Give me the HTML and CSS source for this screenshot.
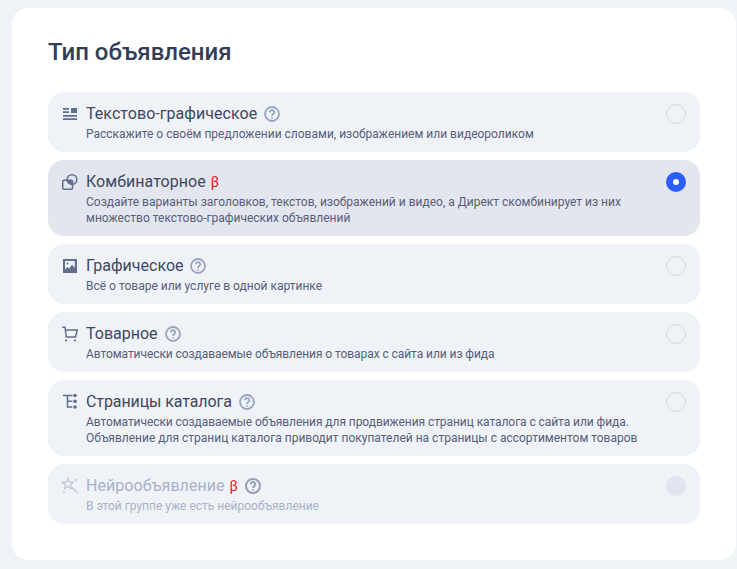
FILE: index.html
```html
<!DOCTYPE html>
<html lang="ru">
<head>
<meta charset="utf-8">
<title>Тип объявления</title>
<link rel="stylesheet" href="styles.css">
</head>
<body>
<main class="card">
  <h1 class="title">Тип объявления</h1>
  <div class="list">
    <div class="row">
      <svg class="icon" viewBox="0 0 16 16"><path d="M1 2h6v1.700H1zM1 5.300h6V7H1zM9 2h6v5H9zM1 9h14v1.700H1zM1 12.300h14V14H1z"/></svg>
      <div class="body">
        <div class="head"><span class="name wide">Текстово-графическое</span><svg class="help" viewBox="0 0 16 16"><circle class="help-ring" cx="8" cy="8" r="7"/><path class="help-mark" d="M5.800 6.300a2.200 2.200 0 1 1 3.500 1.800c-.8.500-1.300 1-1.300 1.900"/><circle class="help-dot" cx="8" cy="11.800" r=".9"/></svg></div>
        <p class="desc">Расскажите о своём предложении словами, изображением или видеороликом</p>
      </div>
      <span class="radio"></span>
    </div>
    <div class="row row-selected">
      <svg class="icon" viewBox="0 0 16 16"><rect class="line" x=".75" y="6.250" width="9.750" height="9" rx="1"/><circle class="line" cx="10" cy="5.500" r="4.800"/><path d="M5.300 6.500h5.200v3.800a4.800 4.800 0 0 1-5.200-3.800z"/></svg>
      <div class="body">
        <div class="head"><span class="name wide">Комбинаторное</span><span class="beta">β</span></div>
        <p class="desc">Создайте варианты заголовков, текстов, изображений и видео, а Директ скомбинирует из них<br>множество текстово-графических объявлений</p>
      </div>
      <span class="radio radio-on"></span>
    </div>
    <div class="row">
      <svg class="icon" viewBox="0 0 16 16"><path fill-rule="evenodd" d="M1 1h14v14H1zM3 3v8.500l2.500-2.500 1.500 1.500 3-3.700 2.800 3.200V3z"/><circle cx="5.500" cy="5.500" r="1"/></svg>
      <div class="body">
        <div class="head"><span class="name">Графическое</span><svg class="help" viewBox="0 0 16 16"><circle class="help-ring" cx="8" cy="8" r="7"/><path class="help-mark" d="M5.800 6.300a2.200 2.200 0 1 1 3.500 1.800c-.8.500-1.300 1-1.300 1.900"/><circle class="help-dot" cx="8" cy="11.800" r=".9"/></svg></div>
        <p class="desc">Всё о товаре или услуге в одной картинке</p>
      </div>
      <span class="radio"></span>
    </div>
    <div class="row">
      <svg class="icon" viewBox="0 0 16 16"><path class="line" d="M.3 1.200H3l1.300 9.800h9.200l1.800-7H3.600"/><circle cx="4" cy="14.500" r="1.100"/><circle cx="13" cy="14.500" r="1.100"/></svg>
      <div class="body">
        <div class="head"><span class="name">Товарное</span><svg class="help" viewBox="0 0 16 16"><circle class="help-ring" cx="8" cy="8" r="7"/><path class="help-mark" d="M5.800 6.300a2.200 2.200 0 1 1 3.500 1.800c-.8.500-1.300 1-1.300 1.900"/><circle class="help-dot" cx="8" cy="11.800" r=".9"/></svg></div>
        <p class="desc"><span class="tight">Автоматически создаваемые объявления о товарах с сайта или из фида</span></p>
      </div>
      <span class="radio"></span>
    </div>
    <div class="row">
      <svg class="icon" viewBox="0 0 16 16"><path class="line" d="M1 1.500h9.500M5.500 1.500V13h4.800M5.500 7.300h4.800"/><circle cx="13" cy="1.500" r="1.800"/><circle cx="13" cy="7.300" r="1.800"/><circle cx="13" cy="13" r="1.800"/></svg>
      <div class="body">
        <div class="head"><span class="name narrow">Страницы каталога</span><svg class="help" viewBox="0 0 16 16"><circle class="help-ring" cx="8" cy="8" r="7"/><path class="help-mark" d="M5.800 6.300a2.200 2.200 0 1 1 3.500 1.800c-.8.500-1.300 1-1.300 1.900"/><circle class="help-dot" cx="8" cy="11.800" r=".9"/></svg></div>
        <p class="desc"><span class="tight">Автоматически создаваемые объявления для продвижения страниц каталога с сайта или фида.</span><br>Объявление для страниц каталога приводит покупателей на страницы с ассортиментом товаров</p>
      </div>
      <span class="radio"></span>
    </div>
    <div class="row row-disabled">
      <svg class="icon" viewBox="0 0 16 16"><path class="line line-thick" d="M6 .5l1.400 3.300 3.600.6-2.500 2.500.6 3.500-3.100-1.700-3.200 1.700.6-3.500L.5 4.400l3.900-.6zM9.800 9.200l5.400 5.600"/><circle cx="13.500" cy="2" r="1.200"/><circle cx="2" cy="14" r="1.100"/></svg>
      <div class="body">
        <div class="head"><span class="name wide">Нейрообъявление</span><span class="beta">β</span><svg class="help help-strong" viewBox="0 0 16 16"><circle class="help-ring" cx="8" cy="8" r="7"/><path class="help-mark" d="M5.800 6.300a2.200 2.200 0 1 1 3.500 1.800c-.8.500-1.300 1-1.300 1.900"/><circle class="help-dot" cx="8" cy="11.800" r=".9"/></svg></div>
        <p class="desc">В этой группе уже есть нейрообъявление</p>
      </div>
      <span class="radio radio-off"></span>
    </div>
  </div>
</main>
</body>
</html>
```

FILE: styles.css
```css
* { box-sizing: border-box; }
html, body { margin: 0; height: 100%; }
body {
  background: #eff2f7;
  padding: 8px 1px 0 12px;
  font-family: Roboto, "Noto Sans", "Liberation Sans", sans-serif;
  color: #343c55;
  overflow: hidden;
}
.card {
  background: #fff;
  border-radius: 16px;
  padding: 28px 36px 36px;
  height: 552px;
}
.title {
  margin: 0 0 24px;
  font-size: 24px;
  line-height: 32px;
  font-weight: 500;
  color: #343d56;
}
.list { display: flex; flex-direction: column; gap: 8px; }
.row {
  display: flex;
  align-items: flex-start;
  background: #eff2f7;
  border-radius: 16px;
  padding: 12px 14px 10px;
}
.row-selected { background: #e3e6ef; }
.icon {
  flex: none;
  width: 16px;
  height: 16px;
  margin: 2px 8px 0 0;
  fill: #626e8e;
  overflow: visible;
}
.line { fill: none; stroke: #626e8e; stroke-width: 1.500; }
.body { flex: 1; min-width: 0; }
.head { display: flex; align-items: center; height: 20px; }
.name { font-size: 16px; line-height: 20px; color: #3f4760; }
.wide { letter-spacing: .05px; }
.narrow { letter-spacing: -.1px; }
.beta { margin-left: 5px; font-size: 14px; line-height: 20px; color: #e81313; }
.help { width: 16px; height: 16px; margin-left: 7px; flex: none; }
.help-ring, .help-mark { fill: none; stroke: #9aa4bd; stroke-width: 1.800; }
.help-dot { fill: #9aa4bd; }
.desc {
  margin: 2px 0 0;
  font-size: 12px;
  line-height: 16px;
  color: #565f7a;
}
.tight { letter-spacing: -.07px; }
.radio {
  flex: none;
  width: 20px;
  height: 20px;
  border-radius: 50%;
  border: 1px solid #d3d8e4;
}
.radio-on { border: 7px solid #2a5cff; background: #fff; }
.radio-off { border: none; background: #e1e5ef; }
.row-disabled .name, .row-disabled .desc { color: #a9b2c8; }
.row-disabled .icon { fill: #c4cad9; }
.row-disabled .line { stroke: #c4cad9; }
.help-strong .help-ring, .help-strong .help-mark { stroke: #959fb8; stroke-width: 2; }
.help-strong .help-dot { fill: #959fb8; }
```
